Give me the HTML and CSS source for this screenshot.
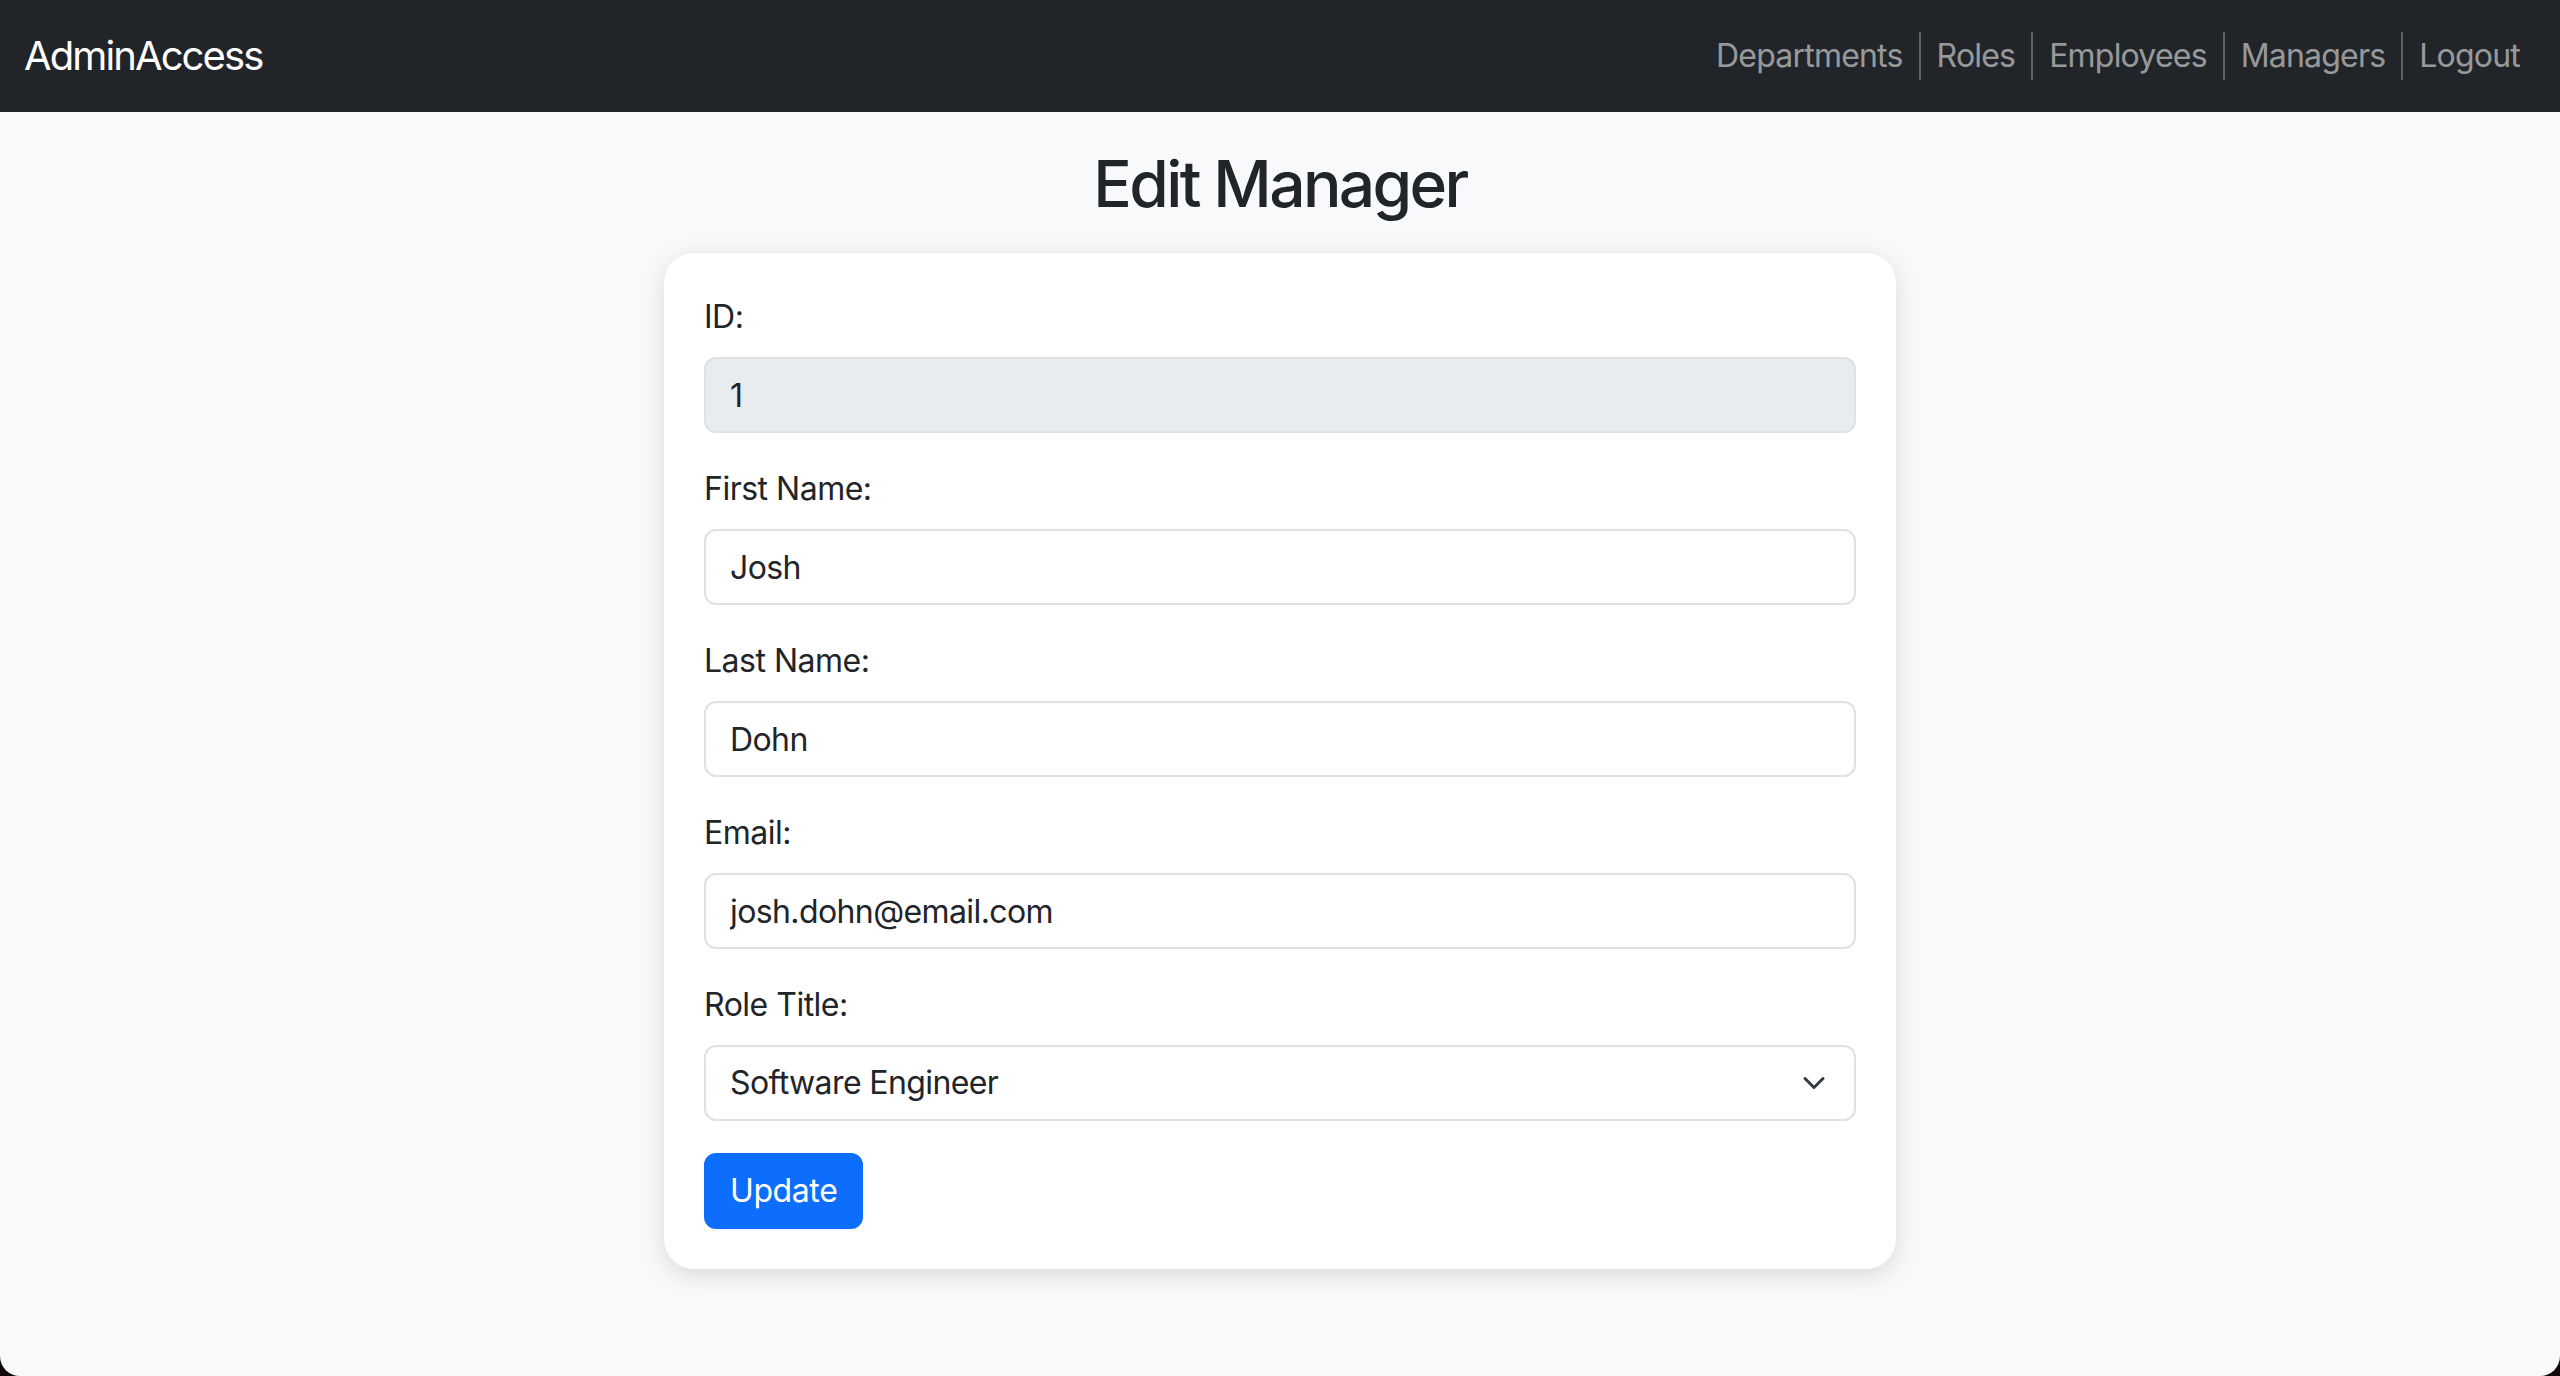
FILE: index.html
```html
<!DOCTYPE html>
<html lang="en">
<head>
<meta charset="utf-8">
<title>Edit Manager</title>
<link rel="stylesheet" href="styles.css">
</head>
<body>
<div class="page">
  <nav class="navbar">
    <a class="brand" href="#">AdminAccess</a>
    <ul class="nav-links">
      <li><a href="#">Departments</a></li>
      <li><a href="#">Roles</a></li>
      <li><a href="#">Employees</a></li>
      <li><a href="#">Managers</a></li>
      <li><a href="#">Logout</a></li>
    </ul>
  </nav>
  <main class="content">
    <h2 class="title">Edit Manager</h2>
    <div class="card">
      <form class="form">
        <div class="group">
          <label class="label" for="id">ID:</label>
          <input class="control disabled" id="id" type="text" value="1" disabled>
        </div>
        <div class="group">
          <label class="label" for="fn">First Name:</label>
          <input class="control" id="fn" type="text" value="Josh">
        </div>
        <div class="group">
          <label class="label" for="ln">Last Name:</label>
          <input class="control" id="ln" type="text" value="Dohn">
        </div>
        <div class="group">
          <label class="label" for="em">Email:</label>
          <input class="control" id="em" type="email" value="josh.dohn@email.com">
        </div>
        <div class="group">
          <label class="label" for="rt">Role Title:</label>
          <div class="select-wrap">
            <select class="control select" id="rt">
              <option selected>Software Engineer</option>
              <option>Manager</option>
            </select>
            <svg class="chevron" width="32" height="32" viewBox="0 0 32 32" aria-hidden="true">
              <path d="M7 11.5l9 9 9-9" fill="none" stroke="#343a40" stroke-width="3" stroke-linecap="round" stroke-linejoin="round"/>
            </svg>
          </div>
        </div>
        <button class="btn" type="button">Update</button>
      </form>
    </div>
  </main>
</div>
</body>
</html>
```

FILE: styles.css
```css
* { box-sizing: border-box; }

html {
  background: #140909;
  height: 100%;
}

body {
  margin: 0;
  height: 100%;
  font-family: Inter, "Noto Sans", "Liberation Sans", sans-serif;
  font-size: 32px;
  line-height: 48px;
  color: #212529;
}

.page {
  min-height: 100%;
  background: #f8f9fa;
  border-radius: 0 0 20px 20px;
  overflow: hidden;
}

.navbar {
  height: 112px;
  background: #212529;
  display: flex;
  align-items: center;
  justify-content: space-between;
  padding: 0 24px;
}

.brand {
  color: #fff;
  text-decoration: none;
  font-size: 40px;
  line-height: 60px;
  letter-spacing: -1.9px;
}

.nav-links {
  list-style: none;
  margin: 0;
  padding: 0;
  display: flex;
  align-items: center;
}

.nav-links li + li {
  border-left: 2px solid rgba(255, 255, 255, 0.28);
}

.nav-links a {
  display: block;
  padding: 0 16px;
  line-height: 48px;
  color: rgba(255, 255, 255, 0.55);
  text-decoration: none;
  letter-spacing: -0.8px;
}

.content {
  padding: 33px 0 60px;
  display: flex;
  flex-direction: column;
  align-items: center;
}

.title {
  margin: 0 0 31px;
  font-size: 64px;
  line-height: 77px;
  font-weight: 500;
  letter-spacing: -2.6px;
}

.card {
  width: 1232px;
  background: #fff;
  border-radius: 30px;
  box-shadow: 0 6px 24px rgba(0, 0, 0, 0.13);
  padding: 40px;
}

.group {
  margin-bottom: 32px;
}

.label {
  display: block;
  margin-bottom: 16px;
  letter-spacing: -0.5px;
}

.control {
  display: block;
  width: 100%;
  height: 76px;
  padding: 12px 24px;
  font: inherit;
  letter-spacing: -0.6px;
  color: #212529;
  background: #fff;
  border: 2px solid #dee2e6;
  border-radius: 12px;
  outline: none;
}

.control.disabled {
  background: #e9ecef;
  opacity: 1;
  -webkit-text-fill-color: #212529;
}

.select-wrap {
  position: relative;
}

.select {
  appearance: none;
  -webkit-appearance: none;
  padding-right: 72px;
}

.chevron {
  position: absolute;
  right: 26px;
  top: 22px;
  pointer-events: none;
}

.btn {
  display: block;
  height: 76px;
  padding: 12px 24px;
  font: inherit;
  letter-spacing: -0.4px;
  color: #fff;
  background: #0d6efd;
  border: 2px solid #0d6efd;
  border-radius: 12px;
}
```
